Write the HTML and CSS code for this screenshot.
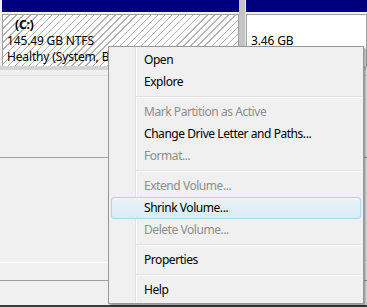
FILE: index.html
```html
<!DOCTYPE html>
<html>
<head>
  <title>Disk Management</title>
  <link rel="stylesheet" href="styles.css">
</head>
<body>
  <div class="disk">
    <div class="partition system">
      <div class="part-head"></div>
      <div class="part-body hatched">
        <div class="part-name">(C:)</div>
        <div>145.49 GB NTFS</div>
        <div>Healthy (System, Boot, Page File, Active, Crash Dump, Primary Partition)</div>
      </div>
    </div>
    <div class="divider"></div>
    <div class="partition free">
      <div class="part-head"></div>
      <div class="part-body plain">
        <div class="part-name">&nbsp;</div>
        <div>3.46 GB</div>
      </div>
    </div>
  </div>

  <div class="rows">
    <div class="row row-a"></div>
    <div class="row row-b"></div>
    <div class="row row-c"></div>
    <div class="row row-d"></div>
    <div class="row row-e"></div>
  </div>

  <div class="menu">
    <div class="item">Open</div>
    <div class="item">Explore</div>
    <div class="sep"></div>
    <div class="item off">Mark Partition as Active</div>
    <div class="item">Change Drive Letter and Paths...</div>
    <div class="item off">Format...</div>
    <div class="sep"></div>
    <div class="item off">Extend Volume...</div>
    <div class="item hover">Shrink Volume...</div>
    <div class="item off">Delete Volume...</div>
    <div class="sep"></div>
    <div class="item">Properties</div>
    <div class="sep"></div>
    <div class="item">Help</div>
  </div>
</body>
</html>
```

FILE: styles.css
```css
body {
  margin: 0;
  width: 367px;
  height: 307px;
  overflow: hidden;
  background-color: #f0f0f0;
  font-family: "Noto Sans", "Open Sans", sans-serif;
  font-size: 12px;
  letter-spacing: -0.45px;
  color: #000;
}

.disk {
  display: flex;
  height: 66px;
  border-bottom: 4px solid #d4d4d4;
}

.partition {
  display: flex;
  flex-direction: column;
  overflow: hidden;
}

.system {
  width: 237px;
  padding-left: 2px;
}

.free {
  flex: 1;
}

.divider {
  width: 6px;
  background-color: #c4c4c4;
  border-right: 1px solid #e8e8e8;
}

.part-head {
  height: 12px;
  background-color: #00007f;
  flex-shrink: 0;
}

.part-body {
  flex: 1;
  margin-top: 2px;
  border: 1px solid #a0a0a0;
  border-bottom: none;
  padding: 2px 0 0 4px;
  line-height: 16px;
  letter-spacing: -0.15px;
  white-space: nowrap;
  overflow: hidden;
}

.hatched {
  background: repeating-linear-gradient(135deg, #fff 0 4px, #b4b4b4 4px 5px);
}

.plain {
  background-color: #fff;
  padding-left: 4px;
}

.part-name {
  font-weight: bold;
  padding-left: 8px;
}

.rows {
  display: flex;
  flex-direction: column;
}

.row-a {
  height: 5px;
  border-bottom: 1px solid #e2e2e2;
}

.row-b {
  height: 81px;
  border-bottom: 1px solid #a0a0a0;
}

.row-c {
  height: 104px;
  border-bottom: 1px solid #fcfcfc;
}

.row-d {
  height: 17px;
  border-bottom: 1px solid #a0a0a0;
}

.row-e {
  height: 24px;
  border-bottom: 2px solid #3c3c3c;
}

.menu {
  position: absolute;
  left: 108px;
  top: 46px;
  width: 250px;
  padding: 2px;
  border: 1px solid #979797;
  background:
    linear-gradient(to right, transparent 26px, #e2e3e3 26px 27px, #fff 27px 28px, transparent 28px),
    #f0f0f0;
  box-shadow: 2px 2px 2px rgba(0, 0, 0, 0.35);
}

.item {
  height: 22px;
  line-height: 22px;
  padding-left: 33px;
  border-radius: 3px;
}

.item.off {
  color: #8d8d8d;
}

.item.hover {
  height: 20px;
  line-height: 20px;
  padding-left: 32px;
  border: 1px solid #aed7ea;
  background: linear-gradient(to bottom, #eaf5fa, #d8ebf4);
}

.sep {
  height: 1px;
  margin: 3px 0 3px 25px;
  background-color: #e0e0e0;
  border-bottom: 1px solid #fff;
}
```
